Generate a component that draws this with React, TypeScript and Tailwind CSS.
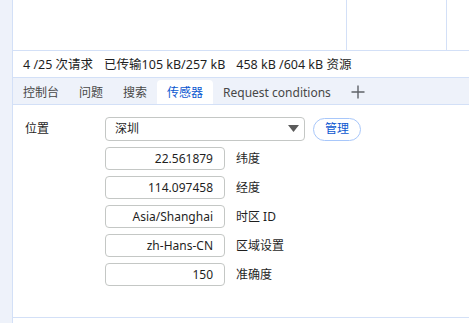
import React from 'react';

const font = { fontFamily: '"Noto Sans", "Noto Sans CJK SC", sans-serif' };

const tabs = ['控制台', '问题', '搜索', '传感器', 'Request conditions'];

const fields = [
  { value: '22.561879', label: '纬度' },
  { value: '114.097458', label: '经度' },
  { value: 'Asia/Shanghai', label: '时区 ID' },
  { value: 'zh-Hans-CN', label: '区域设置' },
  { value: '150', label: '准确度' },
];

export default function App() {
  return (
    <div className="flex h-[323px] w-[469px] overflow-hidden bg-white text-[#1f1f1f]" style={font}>
      <div className="w-[13px] shrink-0 border-r border-[#d3e0f7] bg-[#eef2fa]" />
      <div className="flex min-w-0 flex-1 flex-col">
        {/* network grid remnant */}
        <div className="flex h-[51px] shrink-0 border-b border-[#d3e0f7]">
          <div className="w-[333px] shrink-0" />
          <div className="w-[100px] shrink-0 border-l border-[#d3e0f7]" />
          <div className="flex-1 border-l border-[#d3e0f7]" />
        </div>

        {/* summary bar */}
        <div className="flex h-[27px] shrink-0 items-center whitespace-nowrap border-b border-[#d3e0f7] px-[10px] pt-[2px] text-[12.5px]">
          <span>4 /25 次请求</span>
          <span className="ml-[11px]">已传输105 kB/257 kB</span>
          <span className="ml-[11px]">458 kB /604 kB 资源</span>
        </div>

        {/* drawer tabs */}
        <div className="flex h-[27px] shrink-0 items-end border-b border-[#d3e0f7] bg-[#eef2fa] text-[12px]">
          {tabs.map((t) => {
            const active = t === '传感器';
            return (
              <div
                key={t}
                className={
                  active
                    ? 'flex h-[24px] items-center rounded-t-[4px] bg-white px-[10px] pt-[1px] text-[#0b57d0]'
                    : 'flex h-[24px] items-center px-[10px] pt-[1px] text-[#474747]'
                }
              >
                {t}
              </div>
            );
          })}
          <div className="flex h-[24px] items-center px-[10px] text-[#5f6368]">
            <svg width="14" height="14" viewBox="0 0 14 14">
              <path d="M7 0.5v13M0.5 7h13" stroke="currentColor" strokeWidth="1.4" />
            </svg>
          </div>
        </div>

        {/* sensors panel */}
        <div className="h-[213px] shrink-0 border-b border-[#d3e0f7] pl-[12px] pt-[12px] text-[12px]">
          <div className="flex h-[24px] items-center">
            <div className="w-[80px] shrink-0">位置</div>
            <div className="flex h-[24px] w-[200px] items-center justify-between rounded-[4px] border border-[#c4c7c5] pl-[9px] pr-[5px]">
              <span>深圳</span>
              <svg width="11" height="8" viewBox="0 0 11 8">
                <path d="M0 0h11L5.5 7z" fill="#5b5b5b" />
              </svg>
            </div>
            <button className="ml-[8px] flex h-[23px] w-[48px] items-center justify-center rounded-full border border-[#a8c7fa] text-[12px] text-[#0b57d0]">
              管理
            </button>
          </div>
          <div className="mt-[6px] flex flex-col gap-[6px] pl-[80px]">
            {fields.map((f) => (
              <div key={f.label} className="flex items-center">
                <div className="flex h-[23px] w-[120px] items-center justify-end rounded-[4px] border border-[#c4c7c5] pr-[11px]">
                  {f.value}
                </div>
                <span className="ml-[11px]">{f.label}</span>
              </div>
            ))}
          </div>
        </div>
      </div>
    </div>
  );
}
